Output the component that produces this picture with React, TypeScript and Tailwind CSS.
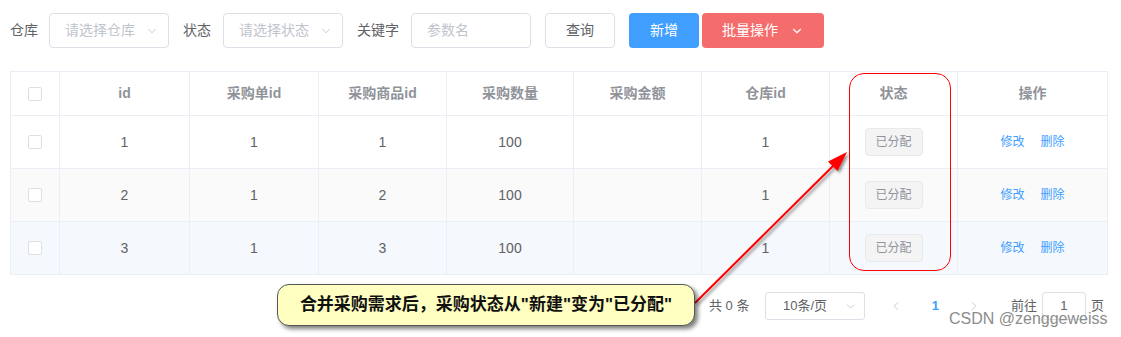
import { ChevronDown, ChevronLeft, ChevronRight } from "lucide-react";

const cols = "grid grid-cols-[49px_130px_129px_128px_127px_128px_128px_128px_150px]";
const cell = "flex items-center justify-center border-r border-b border-[#ebeef5]";

const heads = ["id", "采购单id", "采购商品id", "采购数量", "采购金额", "仓库id", "状态", "操作"];

const rows = [
  { id: 1, order: 1, goods: 1, num: 100, ware: 1, bg: "bg-white" },
  { id: 2, order: 1, goods: 2, num: 100, ware: 1, bg: "bg-[#fafafa]" },
  { id: 3, order: 1, goods: 3, num: 100, ware: 1, bg: "bg-[#f5f8fc]" },
];

function Box() {
  return <div className="w-[14px] h-[14px] border border-[#dcdfe6] rounded-[2px] bg-white" />;
}

function Select(props: { text: string; w: string }) {
  return (
    <div className={`${props.w} h-[35px] flex items-center justify-between border border-[#dcdfe6] rounded-[4px] pl-[15px] pr-[9px] text-[14px] text-[#c0c4cc]`}>
      <span>{props.text}</span>
      <ChevronDown size={14} strokeWidth={1.5} className="text-[#c0c4cc]" />
    </div>
  );
}

export default function App() {
  return (
    <div
      className="relative w-[1121px] h-[337px] overflow-hidden bg-white"
      style={{ fontFamily: "'Liberation Sans', 'Noto Sans CJK SC', sans-serif" }}
    >
      <div className="pl-[10px] pt-[13px]">
        {/* toolbar */}
        <div className="flex items-center h-[35px] text-[14px] text-[#606266]">
          <span className="w-[28px]">仓库</span>
          <div className="ml-[11px]">
            <Select text="请选择仓库" w="w-[120px]" />
          </div>
          <span className="ml-[14px]">状态</span>
          <div className="ml-[12px]">
            <Select text="请选择状态" w="w-[120px]" />
          </div>
          <span className="ml-[14px]">关键字</span>
          <div className="ml-[12px] w-[120px] h-[35px] flex items-center border border-[#dcdfe6] rounded-[4px] pl-[15px] text-[#c0c4cc]">
            参数名
          </div>
          <button className="ml-[14px] w-[70px] h-[35px] border border-[#dcdfe6] rounded-[4px] bg-white text-[#606266]">
            查询
          </button>
          <button className="ml-[14px] w-[70px] h-[35px] rounded-[4px] bg-[#409eff] text-white">
            新增
          </button>
          <button className="ml-[3px] w-[122px] h-[35px] rounded-[4px] bg-[#f56c6c] text-white flex items-center justify-center gap-[12px]">
            <span>批量操作</span>
            <ChevronDown size={14} strokeWidth={2} />
          </button>
        </div>

        {/* table */}
        <div className="mt-[23px] w-[1098px] border-l border-t border-[#ebeef5] text-[14px]">
          <div className={`${cols} h-[44px] font-bold text-[#909399]`}>
            <div className={cell}>
              <Box />
            </div>
            {heads.map((h) => (
              <div key={h} className={cell}>
                {h}
              </div>
            ))}
          </div>
          {rows.map((r) => (
            <div key={r.id} className={`${cols} h-[53px] text-[#606266] ${r.bg}`}>
              <div className={cell}>
                <Box />
              </div>
              <div className={cell}>{r.id}</div>
              <div className={cell}>{r.order}</div>
              <div className={cell}>{r.goods}</div>
              <div className={cell}>{r.num}</div>
              <div className={cell}></div>
              <div className={cell}>{r.ware}</div>
              <div className={cell}>
                <span className="w-[58px] h-[28px] flex items-center justify-center border border-[#e9e9eb] bg-[#f4f4f5] rounded-[4px] text-[12px] text-[#909399]">
                  已分配
                </span>
              </div>
              <div className={`${cell} gap-[16px] text-[12px] text-[#409eff]`}>
                <span>修改</span>
                <span>删除</span>
              </div>
            </div>
          ))}
        </div>
      </div>

      {/* pagination */}
      <div className="mt-[17px] flex items-center justify-end pr-[17px] h-[28px] text-[13px] text-[#606266]">
        <span className="w-[47px]">共 0 条</span>
        <div className="ml-[9px] w-[100px] h-[28px] flex items-center justify-between border border-[#dcdfe6] rounded-[3px] pl-[17px] pr-[7px]">
          <span>10条/页</span>
          <ChevronDown size={13} strokeWidth={1.5} className="text-[#c0c4cc]" />
        </div>
        <div className="ml-[12px] w-[39px] flex justify-center text-[#c0c4cc]">
          <ChevronLeft size={14} strokeWidth={1.5} />
        </div>
        <div className="w-[39px] flex justify-center text-[#409eff] font-bold">1</div>
        <div className="w-[39px] flex justify-center text-[#c0c4cc]">
          <ChevronRight size={14} strokeWidth={1.5} />
        </div>
        <span className="ml-[17px]">前往</span>
        <div className="ml-[5px] w-[44px] h-[28px] flex items-center justify-center border border-[#dcdfe6] rounded-[3px]">
          1
        </div>
        <span className="ml-[5px]">页</span>
      </div>

      {/* annotation overlays */}
      <div className="absolute left-[849px] top-[73px] w-[102px] h-[198px] border border-[#ff0000] rounded-[15px]" />

      <svg className="absolute left-0 top-0 pointer-events-none" width="1121" height="337">
        <defs>
          <filter id="sh" x="-20%" y="-20%" width="140%" height="140%">
            <feDropShadow dx="2" dy="2" stdDeviation="1.5" floodColor="#000" floodOpacity="0.45" />
          </filter>
        </defs>
        <g filter="url(#sh)">
          <line x1="695" y1="303" x2="836" y2="163" stroke="#ff0000" strokeWidth="2" />
          <polygon points="847,152 837.5,171 828,161.5" fill="#ff0000" />
        </g>
      </svg>

      <div className="absolute left-[277px] top-[284px] w-[418px] h-[42px] flex items-center justify-center border border-[#555] rounded-[12px] bg-[#ffffc2] shadow-[3px_3px_4px_rgba(0,0,0,0.5)] text-[17px] font-bold text-[#111]">
        合并采购需求后，采购状态从"新建"变为"已分配"
      </div>

      <div className="absolute left-[949px] top-[311px] text-[16px] leading-none text-[#8c8c8c]">
        CSDN @zenggeweiss
      </div>
    </div>
  );
}
